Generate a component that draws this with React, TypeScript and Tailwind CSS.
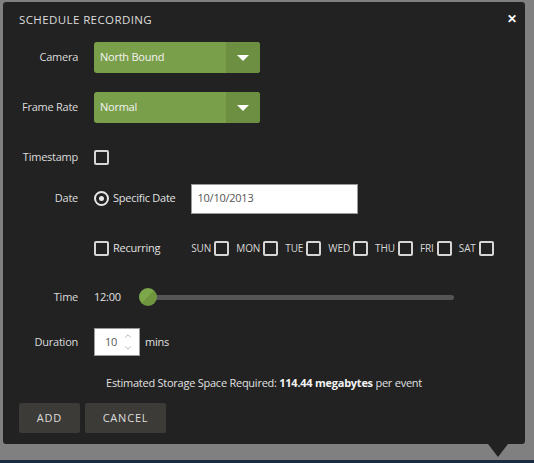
import { ChevronUp, ChevronDown } from "lucide-react";

const days = ["SUN", "MON", "TUE", "WED", "THU", "FRI", "SAT"];

const Check = () => (
  <span className="inline-block w-[15px] h-[15px] rounded-[2px] border-2 border-[#d6d6d6]" />
);

const Select = ({ value }: { value: string }) => (
  <div className="flex w-[166px] h-[31px] rounded-[3px] overflow-hidden bg-[#7a9f4a] text-[#f3f3f3]">
    <div className="flex-1 flex items-center pl-[6px]">{value}</div>
    <div className="w-[34px] flex items-center justify-center bg-[#6d8f41]">
      <span className="block w-0 h-0 border-l-[6px] border-r-[6px] border-t-[6px] border-l-transparent border-r-transparent border-t-white" />
    </div>
  </div>
);

const Row = ({ label, className, children }: { label: string; className: string; children: React.ReactNode }) => (
  <div className={`flex items-center ${className}`}>
    <div className="w-[75px] text-right shrink-0">{label}</div>
    <div className="ml-[16px] flex items-center">{children}</div>
  </div>
);

export default function App() {
  return (
    <div
      className="w-[534px] h-[463px] bg-[#808080] overflow-hidden text-[11px] tracking-[-0.25px] text-[#dcdcdc] flex flex-col"
      style={{ fontFamily: '"Open Sans", "Liberation Sans", sans-serif' }}
    >
      <div className="relative mt-[2px] ml-[3px] w-[522px] h-[442px] bg-[#222222] rounded-[3px]">
        <div className="pt-[10px] pl-[16px] text-[11.5px] tracking-[0.4px] leading-[16px] text-[#dedede]">
          SCHEDULE RECORDING
        </div>
        <div className="absolute top-[11px] right-[8px] text-[12px] font-bold text-white leading-none">✕</div>

        <Row label="Camera" className="mt-[14px] h-[31px]">
          <Select value="North Bound" />
        </Row>
        <Row label="Frame Rate" className="mt-[19px] h-[31px]">
          <Select value="Normal" />
        </Row>
        <Row label="Timestamp" className="mt-[26px] h-[16px]">
          <Check />
        </Row>
        <Row label="Date" className="mt-[19px] h-[29px]">
          <span className="w-[15px] h-[15px] rounded-full border-2 border-[#e6e6e6] flex items-center justify-center">
            <span className="w-[5px] h-[5px] rounded-full bg-[#e6e6e6]" />
          </span>
          <span className="ml-[4px] text-[#e0e0e0]">Specific Date</span>
          <div className="ml-[15px] w-[167px] h-[30px] bg-white border border-[#9a9a9a] flex items-center pl-[6px] text-[#555]">
            10/10/2013
          </div>
        </Row>
        <div className="mt-[27px] h-[16px] flex items-center pl-[91px]">
          <Check />
          <span className="ml-[4px] text-[#e0e0e0]">Recurring</span>
          <div className="ml-[31px] flex items-center text-[10px] tracking-[-0.1px] text-[#d8d8d8]">
            {days.map((d) => (
              <div key={d} className="flex items-center mr-[7px]">
                <span className="mr-[3px]">{d}</span>
                <Check />
              </div>
            ))}
          </div>
        </div>
        <Row label="Time" className="mt-[32px] h-[18px]">
          <span className="w-[26px] text-[#e0e0e0]">12:00</span>
          <div className="relative ml-[19px] w-[315px] h-[18px] flex items-center">
            <div className="ml-[9px] w-[306px] h-[5px] rounded-full bg-[#555555]" />
            <span className="absolute left-0 top-0 w-[18px] h-[18px] rounded-full bg-[linear-gradient(135deg,#7da84a_50%,#6f953f_50%)]" />
          </div>
        </Row>
        <Row label="Duration" className="mt-[22px] h-[28px]">
          <div className="w-[46px] h-[28px] bg-white border border-[#9a9a9a] flex items-center pl-[10px] text-[#555]">
            <span className="flex-1">10</span>
            <span className="flex flex-col justify-between h-full py-[2px] items-center mr-[6px] text-[#888]">
              <ChevronUp size={10} strokeWidth={1.5} />
              <ChevronDown size={10} strokeWidth={1.5} />
            </span>
          </div>
          <span className="ml-[5px] text-[#e0e0e0]">mins</span>
        </Row>
        <div className="mt-[19px] h-[16px] text-center text-[#e0e0e0]">
          Estimated Storage Space Required: <span className="font-bold text-[#f2f2f2]">114.44 megabytes</span> per event
        </div>
        <div className="mt-[12px] pl-[16px] flex gap-[5px] text-[11px] tracking-[0.8px]">
          <button className="w-[61px] h-[30px] rounded-[2px] bg-[#3c3b37] text-[#dedede]">ADD</button>
          <button className="w-[81px] h-[30px] rounded-[2px] bg-[#3c3b37] text-[#dedede]">CANCEL</button>
        </div>

        <span className="absolute left-[485px] top-[442px] w-0 h-0 border-l-[10px] border-r-[10px] border-t-[13px] border-l-transparent border-r-transparent border-t-[#222222]" />
      </div>
      <div className="mt-auto h-[3px] bg-[#1c2b40]" />
    </div>
  );
}
